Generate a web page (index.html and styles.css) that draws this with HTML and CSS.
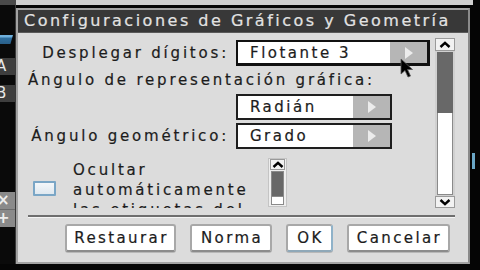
FILE: index.html
```html
<!DOCTYPE html>
<html lang="es">
<head>
<meta charset="utf-8">
<title>Configuraciones de Gráficos y Geometría</title>
<link rel="stylesheet" href="styles.css">
</head>
<body>
<div class="screen">
  <div class="topbar"><div class="tb-left"></div><div class="tb-mid"></div></div>
  <div class="main">
    <div class="sidebar">
      <div class="tab-blue"></div>
      <div class="tab tab-a"><span class="tab-letter">A</span></div>
      <div class="tab tab-b"><span class="tab-letter">B</span></div>
      <div class="tools">
        <span class="tool">×</span>
        <span class="tool">+</span>
      </div>
    </div>
    <div class="dialog">
      <div class="title">Configuraciones de Gráficos y Geometría</div>
      <div class="dbody">
        <div class="content">
          <div class="settings">
            <div class="row r1">
              <span class="lbl">Desplegar dígitos:</span>
              <div class="select wide focus">
                <span class="val">Flotante 3</span>
                <span class="arrow"><svg width="10" height="14" viewBox="0 0 10 14"><path d="M1 1 L9 7 L1 13 Z" fill="#ececec"/></svg></span>
              </div>
            </div>
            <div class="row r2">
              <span class="lbl-full">Ángulo de representación gráfica:</span>
            </div>
            <div class="row r3">
              <span class="lbl"></span>
              <div class="select">
                <span class="val">Radián</span>
                <span class="arrow"><svg width="10" height="14" viewBox="0 0 10 14"><path d="M1 1 L9 7 L1 13 Z" fill="#ececec"/></svg></span>
              </div>
            </div>
            <div class="row r4">
              <span class="lbl">Ángulo geométrico:</span>
              <div class="select">
                <span class="val">Grado</span>
                <span class="arrow"><svg width="10" height="14" viewBox="0 0 10 14"><path d="M1 1 L9 7 L1 13 Z" fill="#ececec"/></svg></span>
              </div>
            </div>
            <div class="check-row">
              <span class="checkbox"></span>
              <div class="check-label">Ocultar<br>automáticamente<br>las etiquetas del</div>
              <div class="sscroll">
                <div class="sb-btn"><svg width="12" height="7" viewBox="0 0 12 7"><path d="M1.5 6 L6 1.8 L10.5 6" fill="none" stroke="#000" stroke-width="2.4"/></svg></div>
                <div class="s-thumb"></div>
                <div class="s-track"></div>
              </div>
            </div>
          </div>
          <div class="vscroll">
            <div class="sb-btn"><svg width="12" height="7" viewBox="0 0 12 7"><path d="M1.5 6 L6 1.8 L10.5 6" fill="none" stroke="#000" stroke-width="2.4"/></svg></div>
            <div class="v-thumb"></div>
            <div class="v-track"></div>
            <div class="sb-btn down"><svg width="12" height="7" viewBox="0 0 12 7"><path d="M1.5 1 L6 5.2 L10.5 1" fill="none" stroke="#000" stroke-width="2.4"/></svg></div>
          </div>
        </div>
        <div class="sep"></div>
        <div class="buttons">
          <span class="btn b-rest">Restaurar</span>
          <span class="btn b-norma">Norma</span>
          <span class="btn b-ok">OK</span>
          <span class="btn b-cancel">Cancelar</span>
        </div>
      </div>
    </div>
    <div class="rightcol"><div class="blue-mark"></div></div>
  </div>
  <svg class="cursor" width="16" height="20" viewBox="0 0 16 20"><path d="M1 1 L1 16 L5 12.5 L8 19 L10.5 18 L7.5 11.5 L12.5 11.5 Z" fill="#000" stroke="#555" stroke-width="0.8"/></svg>
</div>
</body>
</html>
```
FILE: styles.css
```css
* { box-sizing: border-box; }
html, body { margin: 0; padding: 0; background: #000; }
body { font-family: "DejaVu Sans", sans-serif; }

.screen {
  position: relative;
  width: 480px;
  height: 270px;
  overflow: hidden;
  background: #050505;
}

.topbar { display: flex; height: 5px; }
.tb-left { width: 16px; background: #4a4a4a; }
.tb-mid { width: 457px; background: #cfcfcf; }

.main { display: flex; }

.sidebar {
  width: 16px;
  display: flex;
  flex-direction: column;
  padding-top: 30px;
  background: #0a0a0a;
  border-right: 1px solid #3a3a3a;
}
.tab-blue {
  width: 13px;
  height: 9px;
  background: linear-gradient(#6fb0dc 0, #6fb0dc 2px, #2f6f9f 3px, #2a5f88 100%);
  clip-path: polygon(0 0, 100% 0, 80% 100%, 0 100%);
}
.tab {
  height: 17px;
  background: #3e3e3e;
  overflow: hidden;
  color: #e8e8e8;
  font-size: 15px;
  line-height: 17px;
}
.tab-a { margin-top: 14px; }
.tab-b { margin-top: 10px; }
.tab-letter { display: block; margin-left: -4px; }
.tools {
  margin-top: 90px;
  height: 35px;
  background: #8a8a8a;
  display: flex;
  flex-direction: column;
  overflow: hidden;
}
.tool {
  display: block;
  height: 17px;
  overflow: hidden;
  color: #ededed;
  font-size: 15px;
  line-height: 17px;
  margin-left: -3px;
  font-weight: bold;
}
.tool + .tool { border-top: 1px solid #6a6a6a; height: 18px; }

.dialog {
  width: 454px;
  height: 256px;
  margin-top: 3px;
  border: 2px solid #a2a2a2;
  border-right-color: #8a8a8a;
  background: #dcdcdc;
  display: flex;
  flex-direction: column;
}
.title {
  height: 23px;
  background: #383838;
  color: #e2e2e2;
  font-size: 16px;
  line-height: 22px;
  letter-spacing: 2.5px;
  padding-left: 6px;
  white-space: nowrap;
  border-bottom: 1px solid #5a5a5a;
  -webkit-text-stroke: 0.2px #e2e2e2;
}
.dbody {
  flex: 1;
  padding: 5px 13px 7px 10px;
  display: flex;
  flex-direction: column;
}
.content { display: flex; height: 170px; }
.settings {
  flex: 1;
  padding-top: 2px;
  display: flex;
  flex-direction: column;
  color: #1c1c1c;
  font-size: 15px;
  letter-spacing: 2.8px;
  -webkit-text-stroke: 0.2px #1c1c1c;
}
.row { display: flex; align-items: center; }
.r1 { height: 26px; }
.r2 { height: 28px; }
.r3 { height: 26px; }
.r4 { height: 26px; margin-top: 3px; }
.lbl {
  width: 201px;
  margin-right: 7px;
  text-align: right;
  white-space: nowrap;
}
.lbl-full { white-space: nowrap; }

.select {
  width: 156px;
  height: 26px;
  display: flex;
  border: 2px solid #1e1e1e;
  background: #fff;
}
.select.wide { width: 194px; }
.select.focus { border-width: 2px 3px 3px 2px; border-color: #111; }
.val {
  flex: 1;
  padding-left: 12px;
  line-height: 22px;
  white-space: nowrap;
  letter-spacing: 2.5px;
}
.arrow {
  width: 37px;
  background: #b6b6b6;
  display: flex;
  align-items: center;
  justify-content: center;
}

.check-row {
  height: 51px;
  margin-top: 8px;
  display: flex;
  align-items: flex-start;
  padding-left: 5px;
}
.checkbox {
  width: 23px;
  height: 15px;
  margin-top: 24px;
  margin-right: 17px;
  border: 2px solid #7aa6c6;
  background: linear-gradient(#f4f7fa, #dfe8ef);
  border-radius: 1px;
}
.check-label {
  width: 190px;
  height: 51px;
  overflow: hidden;
  padding-top: 3px;
  line-height: 20px;
  white-space: nowrap;
}
.sscroll {
  width: 19px;
  height: 49px;
  margin-left: 5px;
  margin-top: 1px;
  display: flex;
  flex-direction: column;
  background: #eeeeee;
  border: 1px solid #c4c4c4;
  padding: 0 1px 1px;
}
.sb-btn {
  height: 11px;
  flex: none;
  display: flex;
  align-items: center;
  justify-content: center;
  background: #f2f2f2;
  border: 1px solid #9a9a9a;
}
.s-thumb {
  height: 26px;
  margin: 1px 1px 0;
  background: #686868;
  border: 1px solid #8a8a8a;
}
.s-track {
  flex: 1;
  margin: 0 1px;
  background: #fff;
  border: 1px solid #8a8a8a;
  border-top: none;
}

.vscroll {
  width: 20px;
  display: flex;
  flex-direction: column;
  background: #d0d0d0;
}
.vscroll .sb-btn { height: 13px; }
.v-thumb {
  height: 61px;
  margin: 1px 2px 0;
  background: #686868;
}
.v-track {
  flex: 1;
  margin: 0 2px 1px;
  background: #fff;
  border: 1px solid #8a8a8a;
  border-top: none;
}
.vscroll .down { height: 12px; }

.sep {
  margin-top: 7px;
  height: 3px;
  border-top: 2px solid #6e6e6e;
  border-bottom: 1px solid #f4f4f4;
}
.buttons {
  margin-top: 6px;
  height: 28px;
  display: flex;
  gap: 14px;
  padding-left: 37px;
}
.btn {
  height: 28px;
  display: flex;
  align-items: center;
  justify-content: center;
  padding-left: 2px;
  background: #fff;
  border: 2px solid #a8a8a8;
  border-bottom-color: #8c8c8c;
  border-radius: 3px;
  box-shadow: 0 1px 0 #b8b8b8;
  color: #1c1c1c;
  font-size: 15px;
  letter-spacing: 2.4px;
  white-space: nowrap;
  -webkit-text-stroke: 0.2px #1c1c1c;
}
.b-rest { width: 111px; }
.b-norma { width: 82px; }
.b-ok { width: 47px; border-right-color: #8fb2c9; border-bottom-color: #8fa8b8; }
.b-cancel { width: 103px; }

.rightcol { width: 10px; }
.blue-mark {
  width: 3px;
  height: 16px;
  margin-top: 148px;
  margin-left: 2px;
  background: #6aa6c6;
}

.cursor {
  position: absolute;
  left: 400px;
  top: 58px;
}
```
